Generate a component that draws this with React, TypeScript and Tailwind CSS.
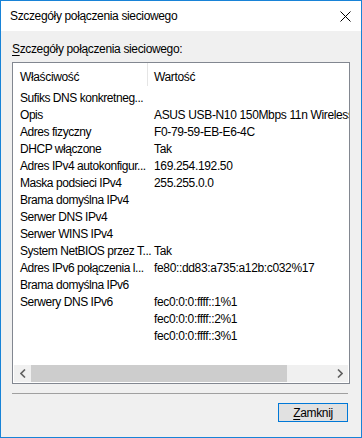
import React from "react";

const rows: [string, string][] = [
  ["Sufiks DNS konkretneg...", ""],
  ["Opis", "ASUS USB-N10 150Mbps 11n Wireless USB Network Adapter"],
  ["Adres fizyczny", "F0-79-59-EB-E6-4C"],
  ["DHCP włączone", "Tak"],
  ["Adres IPv4 autokonfigur...", "169.254.192.50"],
  ["Maska podsieci IPv4", "255.255.0.0"],
  ["Brama domyślna IPv4", ""],
  ["Serwer DNS IPv4", ""],
  ["Serwer WINS IPv4", ""],
  ["System NetBIOS przez T...", "Tak"],
  ["Adres IPv6 połączenia l...", "fe80::dd83:a735:a12b:c032%17"],
  ["Brama domyślna IPv6", ""],
  ["Serwery DNS IPv6", "fec0:0:0:ffff::1%1"],
  ["", "fec0:0:0:ffff::2%1"],
  ["", "fec0:0:0:ffff::3%1"],
];

export default function App() {
  return (
    <div
      className="w-[362px] h-[438px] border border-[#1883d7] bg-[#f0f0f0] flex flex-col text-[12px] tracking-[-0.35px] text-black overflow-hidden"
      style={{ fontFamily: '"Liberation Sans", Arial, sans-serif' }}
    >
      <div className="h-[30px] bg-white flex items-center pl-[9px] pr-[9px] shrink-0">
        <span className="flex-1">Szczegóły połączenia sieciowego</span>
        <svg width="11" height="11" viewBox="0 0 11 11" className="mr-[1px]">
          <path d="M0.5 0.5 L10.5 10.5 M10.5 0.5 L0.5 10.5" stroke="#000" strokeWidth="1" />
        </svg>
      </div>
      <div className="flex flex-col px-[11px]">
        <div className="mt-[11px] leading-[15px] h-[15px]">
          <span className="underline underline-offset-2">S</span>zczegóły połączenia sieciowego:
        </div>
        <div className="mt-[5px] h-[322px] border border-[#828790] bg-white flex flex-col">
          <div className="flex-1 overflow-hidden">
            <div className="flex h-[25px] items-center">
              <div className="w-[134px] shrink-0 pl-[7px] pt-[3px] whitespace-nowrap">Właściwość</div>
              <div className="w-px shrink-0 h-[23px] bg-[#e5e5e5] self-start"></div>
              <div className="flex-1 pl-[6px] pt-[3px] whitespace-nowrap">Wartość</div>
            </div>
            <div className="pt-px">
              {rows.map(([k, v], i) => (
                <div key={i} className="flex h-[17px] items-center whitespace-nowrap">
                  <div className="w-[134px] shrink-0 pl-[7px] overflow-visible tracking-[-0.45px]">{k}</div>
                  <div className="w-px shrink-0"></div>
                  <div className="flex-1 min-w-0 pl-[6px] overflow-hidden">{v}</div>
                </div>
              ))}
            </div>
          </div>
          <div className="h-[17px] mx-px mb-px bg-[#f0f0f0] flex items-center">
            <div className="w-[17px] h-full flex items-center justify-center">
              <svg width="6" height="9" viewBox="0 0 6 9">
                <path d="M5 0.5 L1 4.5 L5 8.5" stroke="#606060" strokeWidth="1.6" fill="none" />
              </svg>
            </div>
            <div className="w-[256px] h-full bg-[#cdcdcd]"></div>
            <div className="flex-1"></div>
            <div className="w-[17px] h-full flex items-center justify-center">
              <svg width="6" height="9" viewBox="0 0 6 9">
                <path d="M1 0.5 L5 4.5 L1 8.5" stroke="#606060" strokeWidth="1.6" fill="none" />
              </svg>
            </div>
          </div>
        </div>
        <div className="mt-[9px] h-px bg-[#a0a0a0] mr-[2px]"></div>
        <div className="flex justify-end mt-[9px] pr-[2px]">
          <div className="w-[70px] h-[19px] border border-[#0078d7] bg-[#e1e1e1] flex items-center justify-center leading-none">
            <span>
              <span className="underline underline-offset-2">Z</span>amknij
            </span>
          </div>
        </div>
      </div>
    </div>
  );
}
